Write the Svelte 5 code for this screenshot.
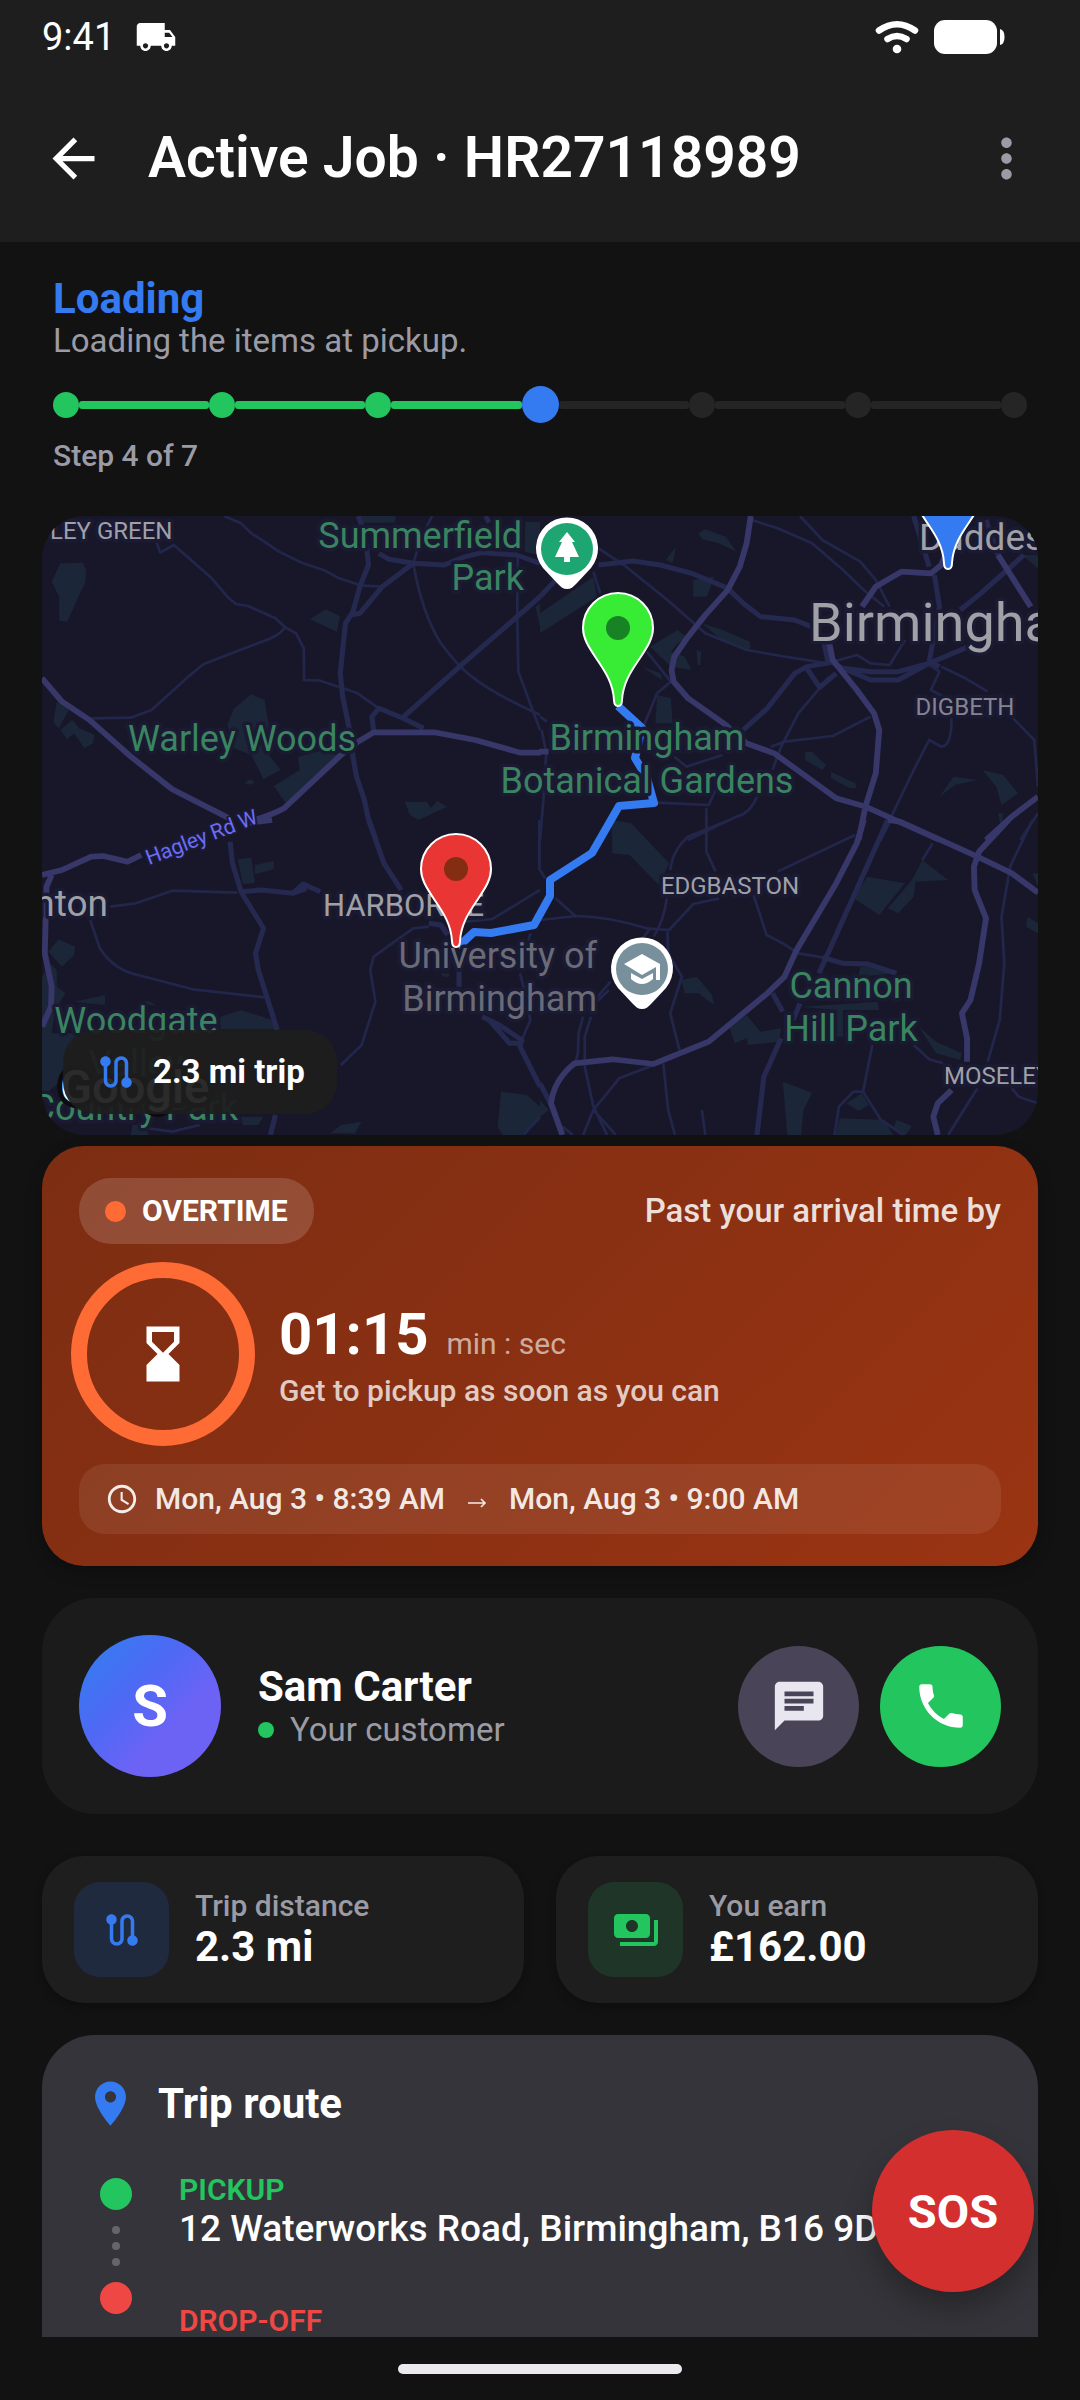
<script>
  const title = 'Active Job · HR27118989';
  const steps = ['done', 'done', 'done', 'current', 'todo', 'todo', 'todo'];

  const routeIcon =
    'M19 15.18V7c0-2.21-1.79-4-4-4s-4 1.79-4 4v10c0 1.1-.9 2-2 2s-2-.9-2-2V8.82C8.16 8.4 9 7.3 9 6c0-1.66-1.34-3-3-3S3 4.34 3 6c0 1.3.84 2.4 2 2.82V17c0 2.21 1.79 4 4 4s4-1.79 4-4V7c0-1.1.9-2 2-2s2 .9 2 2v8.18c-1.16.41-2 1.51-2 2.82 0 1.66 1.34 3 3 3s3-1.34 3-3c0-1.31-.84-2.4-2-2.82z';

  const pin =
    'M0 0C-3 0-4-3-4-6C-5-24-14-36-22-48C-30-60-35-68-35-78A35 35 0 0 1 35-78C35-68 30-60 22-48C14-36 5-24 4-6C4-3 3 0 0 0z';

  const poi = 'M0 40C-4 40-6 38-9 35L-24 19A31 31 0 1 1 24 19L9 35C6 38 4 40 0 40z';

  // Vector tiles of the base map: parks, minor streets, arterials and highways.
  const tiles = [
    {
      at: 'translate(-42 -16) scale(.3444 .3333)',
      parks:
        'M175 190L240 188 250 210 248 245 195 365 172 362 172 290 150 245zM900 358L945 328 987 348 978 395zM660 675L680 625 730 583 768 600 780 670 770 750 815 810 765 838 730 765 680 745zM795 858L870 810 865 770 960 745 985 765 830 910zM1175 905L1240 905 1250 925 1270 903 1298 920 1215 960 1190 945zM165 605L200 630 170 685 155 665zM175 690L210 660 230 685 275 705 270 730 245 745 215 700 195 718zM1040 48H1150L1145 68H1045zM1525 65H1568V165L1523 155zM710 850L725 838 740 846 728 854zM1555 320L1568 310V380z',
      minor:
        'M650 48L700 70 730 100 775 130 810 155 880 190 940 210 985 235 1050 257 1110 260M455 128L465 158 505 135 615 235 660 290 685 312 720 318 800 355 828 382 860 400 882 445 883 540 930 542 1035 578 1100 625M828 382Q810 410 760 425L590 493 550 527 440 630 380 653 265 655M1255 48Q1225 100 1200 190Q1225 340 1280 430Q1330 500 1370 530Q1430 580 1568 645M1503 170L1502 350 1505 515 1568 690',
      arterial:
        'M1040 48L1060 100 1070 195 1045 260 1025 335 1003 370 988 520 995 590 1015 690 1025 770 1035 830 1058 900 1068 950 1092 1020M1100 160L1130 178 1200 190 1290 195 1350 170 1400 158 1500 165 1568 190M1200 190L1110 260 1045 340 1020 345M1568 290L1340 495 1170 652M1085 695L1080 650 1100 625 1170 655 1230 685M1410 48L1420 68',
      highway:
        'M122 535L180 605 260 660 380 770 500 868 665 955M725 965Q790 945 825 925L990 765 1040 725 1085 697H1260L1380 720 1510 758H1570',
    },
    {
      at: 'translate(498 -16) scale(.3444 .3333)',
      parks:
        'M0 340L155 230 165 290 0 400zM460 100L480 88 540 110 570 155 520 130 470 118zM365 180L395 140 385 190zM445 240L505 230 485 290 445 290zM320 440L400 390 430 415 400 430 380 455 420 470 440 510 380 500zM455 450L468 455 466 495 458 495zM470 370L530 390 610 425V450L540 430zM340 585L380 595 385 670 335 670zM770 755L790 755 830 795 820 810 770 780zM845 815L915 850 920 865 900 865 845 835zM1160 890L1200 830 1270 840 1205 855zM1285 810L1345 825 1388 880 1340 915 1325 860zM215 965H245L300 1020H210zM1400 165H1446V205zM1330 940H1345L1340 990zM295 500L350 520 355 540z',
      minor:
        'M170 145L250 200 370 300 480 400 600 450 700 468 835 490 920 465 960 490 1015 495 1060 420M615 60L690 85 790 130 880 210 940 270 1000 320M755 48L820 120 930 185 975 240 1015 320M155 215L175 280M310 455L380 545 340 580 300 680M1130 495L1160 515 1135 570 1190 600M1195 655Q1195 740 1165 740L1130 720 1085 810 1020 950M1165 500L1235 535 1300 575M1365 645L1435 720 1446 860M960 650L850 708 710 725 670 740M840 530L750 640 700 740 675 810M390 770L425 800 530 765M0 650L20 665M5 690L18 760 10 900 0 1020M340 908L490 915 510 870M483 925V1020M630 890Q610 940 570 950L430 1020M1446 940L1395 1020',
      arterial:
        'M170 195L270 183 350 195 440 220 545 265 590 310 640 350 740 360 800 385M0 290L50 235M590 690L660 625 740 520 775 500 860 485M775 505L812 562 860 520M825 430L835 480 880 505 960 515 1040 515 1130 490 1245 440M880 505L960 540 1040 540 1130 490M1405 165L1280 280 1220 330M1145 225L1160 320 1130 485M1160 500L1130 485M1015 960L985 1020M1085 48L1130 200M1295 60L1330 165',
      highway:
        'M612 48L600 130 580 200 545 270 480 345 430 410 390 470 382 510 388 545 430 595 540 675 600 730 680 760 760 820 860 895 945 920 1020 955 1160 1020M935 320L975 260 1050 215 1135 220 1165 195 1175 170M840 430L850 480 920 570 970 640 985 690 975 820 945 920 925 1020M1330 165L1425 320M1446 890L1370 950 1295 1020M-2 755H25',
    },
    {
      at: 'translate(-42 304) scale(.3444 .3333)',
      parks:
        'M690 118L730 113 740 188 705 193zM740 135L795 123V148L740 163zM140 395L170 358 218 380 215 405 180 440zM122 470L145 430 165 450 165 500 190 520 160 570 150 640H240L190 700 180 780 122 830zM215 545L305 525V555zM400 550L430 542 455 557zM640 590L700 570 790 600 800 628H640zM1455 815L1530 825 1568 860V900L1520 945H1460L1445 920zM960 940L990 915 1050 905 1030 940zM385 915H425L430 945H380zM700 890H765L750 915H705zM1280 460H1305V470H1285z',
      minor:
        'M320 260L395 250 500 212 690 218M262 300L290 385Q330 450 400 465L560 508 770 532M1245 320L1200 325 1085 410 1075 450 1090 545 1050 675 990 735M1350 305L1430 297 1568 210M1540 340L1535 360M1510 460L1520 500 1540 600 1515 660M430 925L500 935 580 915M1568 890L1520 945M1566 0V150',
      arterial:
        'M668 65L675 130 700 215 765 325 742 400 750 450 805 630M700 215L760 210 850 220 880 192 930 215M850 220L890 205M1070 0L1115 130 1165 210M1245 310L1280 315 1300 345M1333 455V500M1400 590L1450 615 1515 660 1510 680 1568 800M1420 600L1480 670 1510 670M785 945L800 885',
      highway:
        'M122 165L180 150 265 110 300 108 370 125 410 105M725 8L790 0M150 165L135 200 130 400 150 500 148 560 122 620',
    },
    {
      at: 'translate(498 304) scale(.3444 .3333)',
      parks:
        'M208 0L265 10 375 130 345 195 260 105 210 100zM950 170L1060 190 985 285 910 235zM1010 265L1080 180 1110 120 1185 180 1090 185 1085 230 1040 280zM410 480L455 470 500 525 505 555 460 520 420 520zM550 620L600 585 640 635 700 625 695 665 605 675 600 655 565 670zM705 785L790 818 765 870 758 945H718zM870 895L1000 900 1025 945H858zM1035 900L1080 918 1060 948 1025 928zM890 850L935 820 955 855 925 873zM1100 620L1150 665 1225 700 1220 720 1150 700zM1415 290L1446 310V340L1411 320zM1430 160H1446V200zM930 440H990L1035 460 925 470zM760 560L980 545 985 570H880V650H862V570zM0 840L25 870 0 890z',
      minor:
        'M0 300L105 288Q200 290 310 325L375 330 445 252 520 235M45 235L105 290M0 150L15 175M368 235Q360 300 330 350M320 325L295 360M378 150Q385 90 430 50L550 0M483 0V95L510 155M690 155L915 45M620 225L658 345 705 370 750 400 820 412M370 335L372 400 412 470 378 580 405 690M165 545L200 510M205 485L150 550M125 590L112 640 110 700 100 740M148 590L130 650V740L155 860 195 945M330 735L230 775 155 870 125 945M155 870L220 945M65 920L95 945M358 730L372 870 392 945M470 870L480 945M1430 0L1365 140 1340 290 1348 430 1335 600 1300 725M1270 805L1185 945M965 675L938 815 990 900 1055 945M938 815H910L868 860 855 945M1085 675L1130 718 1170 730M1370 805L1390 830 1446 850M1140 70L1110 120',
      arterial:
        'M1010 0L810 460M675 520L705 575M755 550L735 600M700 655L650 770 630 945M820 412L880 430 950 432 1035 460M0 790L40 870',
      highway:
        'M940 0L920 70 860 190 745 390 710 470 660 520 490 665 330 732 210 718 100 730Q40 780 32 850L65 945M1010 0L1045 5 1260 105 1370 160 1446 218M1360 0L1275 95 1260 140 1262 210 1295 295 1275 430 1250 540 1225 580 1240 655V725M1195 810L1155 850 1142 890 1155 945',
    },
  ];

  const labels = [
    { t: 'LEY GREEN', x: 8, y: 23, c: 'area district' },
    { t: 'Summerfield', x: 480, y: 32, c: 'park end' },
    { t: 'Park', x: 482, y: 74, c: 'park end' },
    { t: 'Warley Woods', x: 200, y: 235, c: 'park mid' },
    { t: 'nton', x: 66, y: 400, c: 'area town end' },
    { t: 'HARBORNE', x: 281, y: 400, c: 'area suburb' },
    { t: 'University of', x: 555, y: 452, c: 'campus end' },
    { t: 'Birmingham', x: 555, y: 495, c: 'campus end' },
    { t: 'Birmingham', x: 605, y: 234, c: 'park mid' },
    { t: 'Botanical Gardens', x: 605, y: 277, c: 'park mid' },
    { t: 'Birmingham', x: 767, y: 125, c: 'area city' },
    { t: 'Duddeston', x: 877, y: 34, c: 'area town' },
    { t: 'DIGBETH', x: 923, y: 199, c: 'area district mid dim' },
    { t: 'EDGBASTON', x: 688, y: 378, c: 'area district mid' },
    { t: 'Cannon', x: 809, y: 482, c: 'park mid' },
    { t: 'Hill Park', x: 809, y: 525, c: 'park mid' },
    { t: 'MOSELEY', x: 902, y: 568, c: 'area district' },
    { t: 'Woodgate', x: 94, y: 517, c: 'park mid' },
    { t: 'Valley', x: 94, y: 560, c: 'park mid' },
    { t: 'Country Park', x: 196, y: 604, c: 'park end' },
  ];
</script>

<div class="app">
  <header>
    <div class="status">
      <span>9:41</span>
      <svg class="truck" viewBox="0 0 24 24" aria-hidden="true">
        <path fill="currentColor" d="M20 8h-3V4H3c-1.1 0-2 .9-2 2v11h2c0 1.66 1.34 3 3 3s3-1.34 3-3h6c0 1.66 1.34 3 3 3s3-1.34 3-3h2v-5l-3-4zM6 18.500c-.83 0-1.500-.67-1.500-1.500s.67-1.500 1.500-1.500 1.500.67 1.500 1.500-.67 1.500-1.500 1.500zm13.500-9l1.960 2.500H17V9.500h2.500zM18 18.500c-.83 0-1.500-.67-1.500-1.500s.67-1.500 1.500-1.500 1.500.67 1.500 1.500-.67 1.500-1.500 1.500z" />
      </svg>
      <svg class="wifi" viewBox="0 0 44 34" aria-hidden="true">
        <g fill="none" stroke="currentColor" stroke-width="6.500" stroke-linecap="round">
          <path d="M4 10.500Q22 -2 40 10.500" />
          <path d="M12.500 19Q22 13 31.500 19" />
        </g>
        <circle cx="22" cy="29" r="4.300" fill="currentColor" />
      </svg>
      <svg class="battery" viewBox="0 0 72 34" aria-hidden="true">
        <rect width="63" height="34" rx="11" fill="currentColor" />
        <path d="M66 9q4.500 1 4.500 8t-4.500 8z" fill="currentColor" />
      </svg>
    </div>
    <div class="toolbar">
      <button class="plain" aria-label="Back">
        <svg class="i63" viewBox="0 0 24 24"><path fill="currentColor" d="M20 11H7.830l5.590-5.590L12 4l-8 8 8 8 1.410-1.410L7.830 13H20v-2z" /></svg>
      </button>
      <h1>{title}</h1>
      <button class="plain muted" aria-label="More options">
        <svg class="i63" viewBox="0 0 24 24"><path fill="currentColor" d="M12 8c1.100 0 2-.9 2-2s-.9-2-2-2-2 .9-2 2 .9 2 2 2zm0 2c-1.100 0-2 .9-2 2s.9 2 2 2 2-.9 2-2-.9-2-2-2zm0 6c-1.100 0-2 .9-2 2s.9 2 2 2 2-.9 2-2-.9-2-2-2z" /></svg>
      </button>
    </div>
  </header>

  <main>
    <section class="progress">
      <h2>Loading</h2>
      <p class="sub">Loading the items at pickup.</p>
      <div class="track">
        {#each steps as s, i}
          {#if i > 0}<i class="bar" class:done={i < 4}></i>{/if}
          <i class="dot {s}"></i>
        {/each}
      </div>
      <p class="small">Step 4 of 7</p>
    </section>

    <section class="map" aria-label="Map">
      <svg class="canvas" viewBox="0 0 996 619" preserveAspectRatio="xMidYMid slice">
        {#each tiles as tile}
          <g transform={tile.at}>
            <path class="green" d={tile.parks} />
            <path class="road minor" d={tile.minor} />
            <path class="road arterial" d={tile.arterial} />
          </g>
        {/each}
        {#each tiles as tile}
          <g transform={tile.at}><path class="road highway" d={tile.highway} /></g>
        {/each}
        <path class="trip" d="M576 190L600 212 593 242 605 262 612 287 577 290 550 337 508 364V380L492 409 449 417 432 416 416 431" />
        {#each labels as l}
          <text class={l.c} x={l.x} y={l.y}>{l.t}</text>
        {/each}
        <text class="street" transform="translate(107 349) rotate(-21)">Hagley Rd W</text>
        <text class="brand" x="18" y="587">Google</text>

        <g transform="translate(525 33)">
          <path d={poi} fill="#fff" />
          <circle r="26" fill="#1ea672" />
          <path fill="#fff" d="M0-17L8-7H5L12 8H3V13H-3V8H-12L-5-7H-8z" />
        </g>
        <g transform="translate(600 453)">
          <path d={poi} fill="#fff" />
          <circle r="26" fill="#78909c" />
          <path fill="#fff" d="M0-15L18-5V11H14V-2L0 6-18-5zM-11 4L0 10 11 4V10Q0 20-11 10z" />
        </g>
        <g stroke="#fff" stroke-width="2">
          <path d={pin} transform="translate(906 53)" fill="#347af0" />
          <path d={pin} transform="translate(576 190)" fill="#38ec36" />
          <path d={pin} transform="translate(414 431)" fill="#ea3535" />
        </g>
        <circle cx="576" cy="112" r="12" fill="#178324" />
        <circle cx="414" cy="353" r="12" fill="#852d12" />
      </svg>
      <div class="trip-chip">
        <svg class="i42 blue" viewBox="0 0 24 24" aria-hidden="true"><path fill="currentColor" d={routeIcon} /></svg>
        <span>2.3 mi trip</span>
      </div>
    </section>

    <section class="overtime">
      <div class="row between">
        <span class="badge"><i></i>OVERTIME</span>
        <span class="past">Past your arrival time by</span>
      </div>
      <div class="row timer">
        <svg class="ring" viewBox="0 0 168 168" aria-hidden="true">
          <circle cx="84" cy="84" r="84" fill="none" stroke="#ff6b35" stroke-width="16" />
          <path transform="translate(51 51) scale(2.75)" fill="#fff" d="M18 22l-.01-6L14 12l3.990-4.010L18 2H6v6l4 4-4 3.990V22h12zM8 7.500V4h8v3.500l-4 4-4-4z" />
        </svg>
        <div class="count">
          <div class="clock"><strong>01:15</strong><span>min : sec</span></div>
          <p>Get to pickup as soon as you can</p>
        </div>
      </div>
      <div class="window">
        <svg class="i34" viewBox="0 0 24 24" aria-hidden="true"><path fill="currentColor" d="M11.990 2C6.470 2 2 6.480 2 12s4.470 10 9.990 10C17.520 22 22 17.520 22 12S17.520 2 11.990 2zM12 20c-4.420 0-8-3.580-8-8s3.580-8 8-8 8 3.580 8 8-3.580 8-8 8zm.5-13H11v6l5.250 3.150.75-1.230-4.500-2.670z" /></svg>
        <span>Mon, Aug 3 • 8:39 AM</span>
        <svg class="to" viewBox="0 0 20 12" aria-hidden="true"><path d="M1 6H18M14 2L18 6 14 10" fill="none" stroke="currentColor" stroke-width="1.600" /></svg>
        <span>Mon, Aug 3 • 9:00 AM</span>
      </div>
    </section>

    <section class="customer">
      <div class="avatar">S</div>
      <div class="who">
        <h2>Sam Carter</h2>
        <p><i></i>Your customer</p>
      </div>
      <button class="round msg" aria-label="Message">
        <svg class="i58" viewBox="0 0 24 24"><path fill="currentColor" d="M20 2H4c-1.100 0-1.990.9-1.990 2L2 22l4-4h14c1.100 0 2-.9 2-2V4c0-1.100-.9-2-2-2zM6 9h12v2H6V9zm8 5H6v-2h8v2zm4-6H6V6h12v2z" /></svg>
      </button>
      <button class="round call" aria-label="Call">
        <svg class="i58" viewBox="0 0 24 24"><path fill="currentColor" d="M6.620 10.790c1.440 2.830 3.760 5.140 6.590 6.590l2.200-2.200c.27-.27.67-.36 1.020-.24 1.120.37 2.330.57 3.570.57.55 0 1 .45 1 1V20c0 .55-.45 1-1 1-9.390 0-17-7.610-17-17 0-.55.45-1 1-1h3.500c.55 0 1 .45 1 1 0 1.250.2 2.450.57 3.570.11.35.03.74-.25 1.020l-2.200 2.200z" /></svg>
      </button>
    </section>

    <section class="stats">
      <div class="stat">
        <span class="tile distance"><svg class="i42" viewBox="0 0 24 24" aria-hidden="true"><path fill="currentColor" d={routeIcon} /></svg></span>
        <div><p>Trip distance</p><strong>2.3 mi</strong></div>
      </div>
      <div class="stat">
        <span class="tile money"><svg class="i48" viewBox="0 0 24 24" aria-hidden="true"><path fill="currentColor" d="M19 14V6c0-1.100-.9-2-2-2H3c-1.100 0-2 .9-2 2v8c0 1.100.9 2 2 2h14c1.100 0 2-.9 2-2zm-9-1c-1.660 0-3-1.340-3-3s1.340-3 3-3 3 1.340 3 3-1.340 3-3 3zm13-6v11c0 1.100-.9 2-2 2H4v-2h17V7h2z" /></svg></span>
        <div><p>You earn</p><strong>£162.00</strong></div>
      </div>
    </section>

    <section class="route">
      <div class="route-head">
        <svg class="i53 blue" viewBox="0 0 24 24" aria-hidden="true"><path fill="currentColor" d="M12 2C8.130 2 5 5.130 5 9c0 5.250 7 13 7 13s7-7.750 7-13c0-3.870-3.130-7-7-7zm0 9.500c-1.380 0-2.500-1.120-2.500-2.500s1.120-2.500 2.500-2.500 2.500 1.120 2.500 2.500-1.120 2.500-2.500 2.500z" /></svg>
        <h2>Trip route</h2>
      </div>
      <div class="stops">
        <div class="rail">
          <i class="stop from"></i>
          <div class="dots"><i></i><i></i><i></i></div>
          <i class="stop dest"></i>
        </div>
        <div class="addresses">
          <h3 class="from">PICKUP</h3>
          <p>12 Waterworks Road, Birmingham, B16 9D</p>
          <h3 class="dest">DROP-OFF</h3>
        </div>
      </div>
    </section>
  </main>

  <div class="nav"><i></i></div>
  <button class="sos">SOS</button>
</div>

<style>
  :global(body) { background: #121212; }
  .app {
    position: relative; display: flex; flex-direction: column; height: 100vh;
    background: #121212; color: #fff; font-family: Roboto, "Liberation Sans", sans-serif; overflow: hidden;
  }
  h1, h2, h3, p { margin: 0; }
  h2 { font-size: 42px; line-height: 48px; font-weight: 700; }
  i, svg { display: block; flex: none; }
  button { border: 0; padding: 0; font: inherit; color: inherit; cursor: pointer; }
  .i34 { width: 34px; height: 34px; }
  .i42 { width: 42px; height: 42px; }
  .i48 { width: 48px; height: 48px; }
  .i53 { width: 53px; height: 53px; }
  .i58 { width: 58px; height: 58px; }
  .i63 { width: 63px; height: 63px; }
  .blue { color: #347af0; }

  header { flex: none; background: #1e1e1e; }
  .status { display: flex; align-items: center; height: 74px; padding: 0 74px 0 42px; font-size: 38px; line-height: 44px; }
  .truck { width: 42px; height: 42px; margin-left: 20px; }
  .wifi { width: 44px; height: 34px; margin-left: auto; }
  .battery { width: 72px; height: 34px; margin-left: 15px; }
  .toolbar { display: flex; align-items: center; height: 168px; padding: 0 42px; }
  .plain { background: none; }
  .muted { color: #9b9ba5; }
  h1 { flex: 1; margin-left: 43px; font-size: 57px; line-height: 68px; font-weight: 600; }

  main { flex: 1; min-height: 0; overflow-y: auto; scrollbar-width: none; padding: 33px 42px 0; }
  .progress { padding: 0 11px; margin-bottom: 43px; }
  .progress h2 { color: #347af0; }
  .sub { font-size: 33px; line-height: 36px; color: #9b9ba5; }
  .track { display: flex; align-items: center; height: 37px; margin: 27px 0 16px; }
  .bar { flex: 1; height: 8px; border-radius: 3px; background: #252526; }
  .bar.done, .dot.done { background: #22c55e; }
  .dot { width: 26px; height: 26px; border-radius: 50%; background: #252526; }
  .dot.current { width: 37px; height: 37px; background: #347af0; }
  .small { font-size: 30px; line-height: 34px; font-weight: 500; color: #9b9ba5; }

  .map { position: relative; aspect-ratio: 996 / 619; border-radius: 42px; overflow: hidden; background: #181729; }
  .canvas { width: 100%; height: 100%; }
  .green { fill: #1b2638; }
  .road { fill: none; stroke-linejoin: round; }
  .minor { stroke: #21264a; stroke-width: 8; }
  .arterial { stroke: #25284f; stroke-width: 15; }
  .highway { stroke: #38376a; stroke-width: 17; }
  .trip { fill: none; stroke: #347af0; stroke-width: 8; stroke-linejoin: round; }
  text { paint-order: stroke; stroke: #1a1a33; stroke-width: 7px; stroke-linejoin: round; }
  .park { font-size: 36px; fill: #3a8460; }
  .campus { font-size: 36px; fill: #6b6b77; }
  .area { fill: #a0a0a7; }
  .area.dim { fill: #85858f; }
  .area.district { font-size: 24px; }
  .area.suburb { font-size: 31px; }
  .area.town { font-size: 37px; }
  .area.city { font-size: 54px; }
  .street { font-size: 21px; fill: #6c6cf8; stroke-width: 4px; }
  .brand { font-size: 47px; font-weight: 500; fill: #fff; stroke: #0c0c10; stroke-width: 10px; }
  .mid { text-anchor: middle; }
  .end { text-anchor: end; }
  .trip-chip {
    position: absolute; left: 21px; bottom: 21px; display: flex; align-items: center; gap: 16px;
    height: 84px; padding: 0 32px; border-radius: 32px; background: rgba(30, 30, 30, 0.94);
    font-size: 33px; line-height: 38px; font-weight: 700;
  }

  .overtime {
    margin-top: 11px; padding: 32px 37px; border-radius: 42px;
    background: linear-gradient(135deg, #7c2d12, #9a3412); box-shadow: 0 6px 16px rgba(0, 0, 0, 0.25);
  }
  .row { display: flex; align-items: center; }
  .between { justify-content: space-between; }
  .badge {
    display: flex; align-items: center; gap: 16px; height: 66px; padding: 0 26px; border-radius: 32px;
    background: rgba(255, 255, 255, 0.15); font-size: 30px; line-height: 34px; font-weight: 700;
  }
  .badge i { width: 21px; height: 21px; border-radius: 50%; background: #ff6b35; }
  .past { font-size: 33px; line-height: 38px; font-weight: 500; color: rgba(255, 255, 255, 0.85); }
  .timer { gap: 32px; margin: 26px 0; }
  .ring { width: 168px; height: 168px; overflow: visible; }
  .count { display: grid; gap: 6px; }
  .clock { display: flex; align-items: baseline; gap: 18px; }
  .clock strong { font-size: 58px; line-height: 68px; font-weight: 700; }
  .clock span { font-size: 30px; color: rgba(255, 255, 255, 0.6); }
  .timer p { font-size: 30px; line-height: 34px; font-weight: 500; color: rgba(255, 255, 255, 0.75); }
  .window {
    display: flex; align-items: center; height: 70px; padding: 0 26px; border-radius: 26px;
    background: rgba(255, 255, 255, 0.08); color: rgba(255, 255, 255, 0.9);
    font-size: 30px; line-height: 34px; font-weight: 500;
  }
  .window .i34 { margin-right: 16px; }
  .to { width: 20px; height: 12px; margin: 8px 22px 0; }

  .customer {
    display: flex; align-items: center; margin-top: 32px; padding: 37px; border-radius: 53px; background: #1b1b1b;
  }
  .avatar {
    display: grid; place-items: center; width: 142px; height: 142px; border-radius: 50%;
    background: linear-gradient(135deg, #2f80ed, #4f68f5 40%, #6c63f5 65%); font-size: 58px; font-weight: 700;
  }
  .who { flex: 1; margin-left: 37px; }
  .who p { display: flex; align-items: center; gap: 16px; font-size: 33px; line-height: 38px; color: #9b9ba5; }
  .who i { width: 16px; height: 16px; border-radius: 50%; background: #22c55e; }
  .round { display: grid; place-items: center; width: 121px; height: 121px; border-radius: 50%; }
  .msg { background: #4a4458; color: #e8e6ee; }
  .call { margin-left: 21px; background: #22c55e; color: #fff; }

  .stats { display: grid; grid-template-columns: 1fr 1fr; gap: 32px; margin-top: 42px; }
  .stat {
    display: flex; align-items: center; gap: 26px; padding: 26px 32px; border-radius: 42px; background: #1e1e1e;
    box-shadow: 0 4px 8px rgba(0, 0, 0, 0.25);
  }
  .tile { display: grid; place-items: center; width: 95px; height: 95px; border-radius: 26px; }
  .distance { background: #202a3e; color: #347af0; }
  .money { background: #1f3528; color: #22c55e; }
  .stat p { font-size: 30px; line-height: 34px; font-weight: 500; color: #9b9ba5; }
  .stat strong { display: block; font-size: 42px; line-height: 48px; font-weight: 700; }

  .route { margin-top: 32px; padding: 42px 42px 64px; border-radius: 53px 53px 0 0; background: #35343a; }
  .route-head { display: flex; align-items: center; gap: 21px; }
  .stops { display: flex; gap: 47px; margin-top: 43px; padding-left: 16px; }
  .rail { display: flex; flex-direction: column; align-items: center; gap: 16px; padding-top: 5px; }
  .stop { width: 32px; height: 32px; border-radius: 50%; }
  .stop.from { background: #22c55e; }
  .stop.dest { background: #ef4743; }
  .dots { display: grid; gap: 8px; }
  .dots i { width: 8px; height: 8px; border-radius: 50%; background: #65656c; }
  h3 { font-size: 30px; line-height: 34px; font-weight: 600; }
  h3.from { color: #22c55e; }
  h3.dest { color: #ef4743; }
  .addresses p { margin-bottom: 53px; font-size: 37px; line-height: 44px; font-weight: 500; white-space: nowrap; }

  .nav { display: flex; justify-content: center; align-items: center; flex: none; height: 63px; background: #121212; }
  .nav i { width: 284px; height: 10px; border-radius: 5px; background: #eceaee; }
  .sos {
    position: absolute; right: 46px; bottom: 108px; width: 162px; height: 162px; border-radius: 50%;
    background: #d32f2f; font-size: 47px; font-weight: 700; box-shadow: 0 16px 28px rgba(0, 0, 0, 0.28);
  }
</style>
